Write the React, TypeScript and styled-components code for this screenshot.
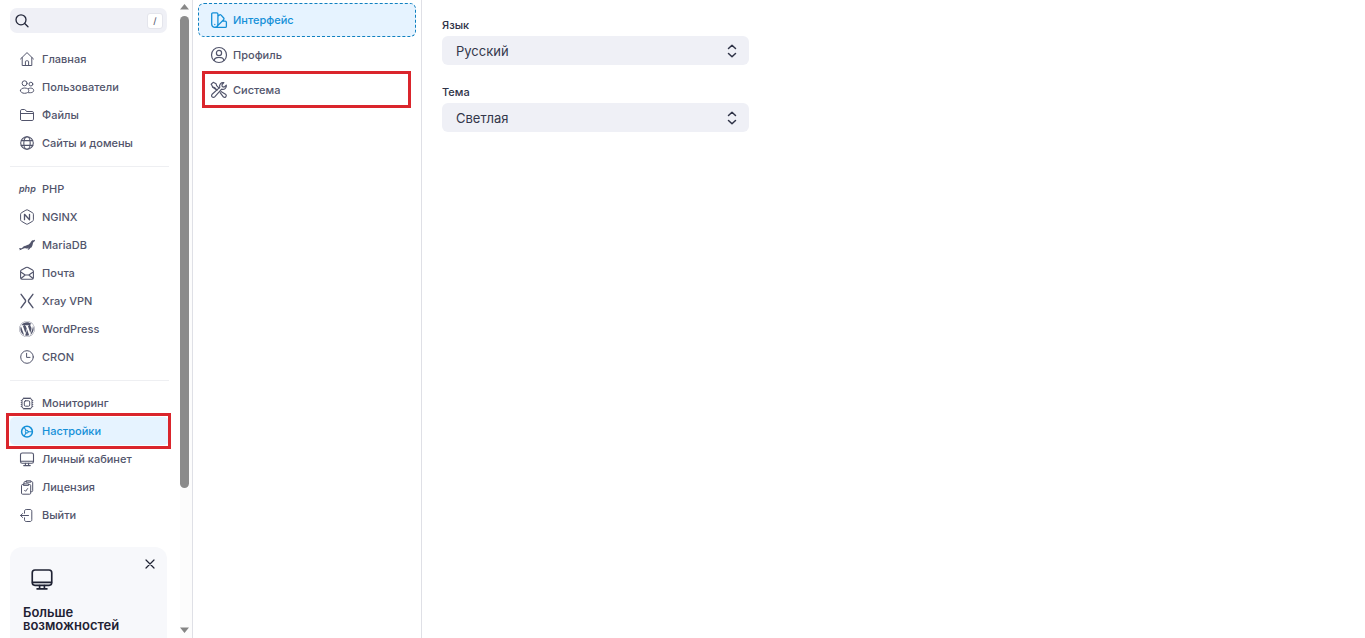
import React from "react";
import styled, { createGlobalStyle, css } from "styled-components";
import { FaWordpress } from "react-icons/fa";
import { SiMariadb } from "react-icons/si";

const GlobalStyle = createGlobalStyle`
  *, *::before, *::after { box-sizing: border-box; }
  body {
    margin: 0;
    background: #fff;
    color: #2f3347;
    font-family: Inter, "Liberation Sans", sans-serif;
    font-size: 11px;
  }
`;

const Shell = styled.div`
  display: flex;
  height: 100vh;
  overflow: hidden;
`;

const Sidebar = styled.aside`
  display: flex;
  flex: none;
  width: 193px;
  border-right: 1px solid #dfe0e6;
`;

const SidebarContent = styled.div`
  flex: 1;
  min-width: 0;
  padding: 8px 11px 0 10px;
  overflow: hidden;
`;

const SearchBox = styled.label`
  display: flex;
  align-items: center;
  height: 25px;
  margin-right: 2px;
  padding: 0 4px;
  border-radius: 7px;
  background: #eff0f6;
  color: #23273a;
`;

const SearchInput = styled.input`
  flex: 1;
  min-width: 0;
  border: 0;
  outline: 0;
  background: transparent;
  font: inherit;
`;

const KeyHint = styled.kbd`
  width: 16px;
  height: 16px;
  border: 1px solid #e4e5ec;
  border-radius: 3px;
  background: #fff;
  color: #5a5e72;
  font: 500 9px/14px Inter, "Liberation Sans", sans-serif;
  text-align: center;
`;

const NavGroups = styled.nav`
  padding-top: 12px;
`;

const NavGroup = styled.ul`
  margin: 0;
  padding: 0;
  list-style: none;

  & + & {
    margin-top: 9px;
    padding-top: 8px;
    border-top: 1px solid #eeeff2;
  }
`;

const NavItem = styled.li`
  position: relative;
`;

const Highlight = styled.span<{ $inset: string }>`
  position: absolute;
  inset: ${(p) => p.$inset};
  border: 3px solid #da252c;
  pointer-events: none;
`;

const NavLink = styled.a<{ $active?: boolean }>`
  display: flex;
  align-items: center;
  gap: 7px;
  height: 28px;
  padding-left: 9px;
  border-radius: 5px;
  color: #52556c;
  font-weight: 500;
  line-height: 16px;
  text-decoration: none;
  white-space: nowrap;
  ${(p) => p.$active && css`
    background: #e6f3ff;
    color: #1590d8;
  `}
`;

const PhpMark = styled.span`
  width: 16px;
  font-size: 9px;
  font-style: italic;
  font-weight: 600;
  line-height: 16px;
`;

const PromoCard = styled.section`
  position: relative;
  margin: 18px 2px 0 0;
  padding: 20px 13px;
  border-radius: 12px;
  background: #f7f8fb;
  color: #1f2233;
`;

const PromoIcon = styled.div`
  display: flex;
  padding-left: 7px;
`;

const PromoTitle = styled.h2`
  margin: 15px 0 0;
  font-size: 13px;
  font-weight: 600;
  line-height: 13px;
`;

const CloseButton = styled.button`
  position: absolute;
  top: 9px;
  right: 9px;
  display: flex;
  padding: 0;
  border: 0;
  background: none;
  color: #1f2233;
`;

const ScrollTrack = styled.div`
  display: flex;
  flex: none;
  flex-direction: column;
  align-items: flex-start;
  width: 12px;
  padding: 4px 0 5px;
  background: #fcfcfc;
`;

const ScrollRail = styled.div`
  flex: 1;
  padding: 6px 0;
`;

const ScrollThumb = styled.div`
  width: 9px;
  height: 78%;
  border-radius: 5px;
  background: #8b8b8b;
`;

const SectionMenu = styled.nav`
  display: flex;
  flex: none;
  flex-direction: column;
  gap: 1px;
  width: 229px;
  padding: 3px 5px;
  border-right: 1px solid #dfe0e6;
`;

const SectionItem = styled.div`
  position: relative;
`;

const SectionLink = styled.a<{ $active?: boolean }>`
  display: flex;
  align-items: center;
  gap: 5px;
  height: 34px;
  padding-left: 11px;
  border: 1px dashed transparent;
  border-radius: 6px;
  color: #52556c;
  font-weight: 500;
  line-height: 16px;
  text-decoration: none;
  ${(p) => p.$active && css`
    border-color: #0f80c0;
    background: #e6f3ff;
    color: #1590d8;
  `}
`;

const Main = styled.main`
  display: flex;
  flex: 1;
  flex-direction: column;
  gap: 19px;
  min-width: 0;
  padding: 17px 20px;
`;

const Field = styled.div`
  display: flex;
  flex-direction: column;
  gap: 3px;
  max-width: 307px;
`;

const FieldLabel = styled.label`
  font-weight: 500;
  line-height: 16px;
`;

const SelectWrap = styled.div`
  display: grid;
  align-items: center;

  & > * { grid-area: 1 / 1; }
  & > svg {
    justify-self: end;
    margin-right: 9px;
    pointer-events: none;
  }
`;

const Select = styled.select`
  appearance: none;
  width: 100%;
  height: 29px;
  padding: 0 32px 0 14px;
  border: 0;
  border-radius: 6px;
  background: #eff0f6;
  color: #33374b;
  font: 400 13px/20px Inter, "Liberation Sans", sans-serif;
`;

type IconProps = { box?: number; size?: number; width?: number; children?: React.ReactNode };

const Svg = ({ box = 16, size = box, width = 1, children }: IconProps) => (
  <svg
    width={size}
    height={size}
    viewBox={`0 0 ${box} ${box}`}
    fill="none"
    stroke="currentColor"
    strokeWidth={width}
    strokeLinecap="round"
    strokeLinejoin="round"
    aria-hidden="true"
  >
    {children}
  </svg>
);

const HomeIcon = () => (
  <Svg>
    <path d="M1.5 8 8 1.6 14.5 8M3.2 6.6v7.9h9.6V6.6M6.4 14.3v-3.6q0-.9.9-.9h1.4q.9 0 .9.9v3.6" />
  </Svg>
);
const UsersIcon = () => (
  <Svg>
    <circle cx="5.6" cy="4.3" r="2.5" />
    <circle cx="11.9" cy="5.1" r="1.9" />
    <path d="M1.4 11.6c0-1.5 1.8-2.6 4.2-2.6s4.2 1.1 4.2 2.6-1.8 2.7-4.2 2.7-4.2-1.2-4.2-2.7ZM9.3 9.7c.7-.4 1.5-.6 2.3-.6 1.8 0 3.1 1 3.1 2.3s-1.3 2.3-3.1 2.3H9.5" />
  </Svg>
);
const FolderIcon = () => (
  <Svg>
    <path d="M1.5 12.2V3.8c0-.8.6-1.3 1.3-1.3h2.7c.4 0 .7.2 1 .5l1 1.5h5.7c.8 0 1.3.6 1.3 1.3v6.4c0 .8-.6 1.3-1.3 1.3H2.8c-.8 0-1.3-.6-1.3-1.3ZM1.5 6.5h13" />
  </Svg>
);
const GlobeIcon = () => (
  <Svg width={1.1}>
    <circle cx="8" cy="8" r="6.3" />
    <ellipse cx="8" cy="8" rx="3.2" ry="6.3" />
    <path d="M2.3 5.6h11.4M2.3 10.4h11.4" />
  </Svg>
);
const NginxIcon = () => (
  <Svg>
    <path d="M7.2 1c.5-.3 1.100-.3 1.600 0l4.800 2.800c.5.3.8.8.8 1.400v5.600c0 .6-.3 1.100-.8 1.400L8.800 15c-.5.3-1.100.3-1.600 0l-4.800-2.800c-.5-.3-.8-.8-.8-1.400V5.200c0-.6.3-1.100.8-1.400Z" />
    <path d="M5.500 10.700V5.300l5 5.400V5.300" strokeWidth="1.300" />
  </Svg>
);
const MailIcon = () => (
  <Svg width={1.1}>
    <path d="M1.6 6.300c0-.6.3-1 .8-1.200L7 2.500c.6-.3 1.400-.3 2 0l4.600 2.600c.5.3.8.7.8 1.200v6.500c0 .9-.6 1.500-1.400 1.500H3c-.8 0-1.400-.6-1.400-1.500ZM1.800 7l4.400 3h3.600l4.400-3M2 13.500l4.200-3.500M14 13.500 9.800 10" />
  </Svg>
);
const XrayIcon = () => (
  <Svg width={1.4}>
    <path d="M2.100 1.300 6.300 7c.4.600.4 1.400 0 2l-4.200 5.700M13.900 1.300 9.700 7c-.4.600-.4 1.400 0 2l4.200 5.700" />
  </Svg>
);
const ClockIcon = () => (
  <Svg>
    <circle cx="8" cy="8" r="6.3" />
    <path d="M7.6 4.300v4.100H11" />
  </Svg>
);
const ChipIcon = () => (
  <Svg>
    <rect x="3" y="3.500" width="10" height="10" rx="2" />
    <rect x="5.300" y="5.800" width="5.400" height="5.400" rx="1.200" />
    <path
      d="M4.500 2.800h7M4.500 14.200h7M2.300 5v7M13.700 5v7"
      strokeWidth="1"
      strokeLinecap="butt"
      strokeDasharray="1 1"
    />
  </Svg>
);
const SettingsIcon = () => (
  <Svg width={1.5}>
    <circle cx="8" cy="8.700" r="5.400" />
    <path d="M9.300 8.700h3.900M7.100 7.700 5.200 4.300M7.100 9.700l-1.900 3.400" strokeWidth="1.100" />
    <circle cx="7.800" cy="8.700" r="1.500" strokeWidth="1" />
  </Svg>
);
const MonitorIcon = ({ size, width = 1.1 }: IconProps) => (
  <Svg size={size} width={width}>
    <rect x="1.500" y="2" width="13" height="10.200" rx="1.800" />
    <path d="M1.700 10.200h12.600M6.400 12.300v2.200M9.600 12.300v2.200M4.700 14.600h6.600" />
  </Svg>
);
const LicenseIcon = () => (
  <Svg>
    <path d="M5 5V3.600c0-.6.400-1 1-1h1.300M12.200 2.600h.5c.6 0 1 .4 1 1v8.100c0 .6-.4 1-1 1h-.9M7.500 1.800h4.400v1.400H7.500Z" />
    <path d="M4.300 5.500h-.8c-.6 0-1 .4-1 1v7.700c0 .6.400 1 1 1h7.200c.6 0 1-.4 1-1V6.500c0-.6-.4-1-1-1h-.8M4.700 4.900h4.900v1.500H4.700ZM5.600 11.300l1 1 2-2.700" />
  </Svg>
);
const LogoutIcon = () => (
  <Svg>
    <path d="M5.500 6.200V4.200c0-1 .7-1.700 1.700-1.700h3.900c1 0 1.700.7 1.700 1.700v8.600c0 1-.7 1.700-1.700 1.700H7.200c-1 0-1.700-.7-1.700-1.700v-2M9.500 8.500H1.600M3.600 6.500l-2 2 2 2" />
  </Svg>
);
const SwatchIcon = () => (
  <Svg box={18} width={1.3}>
    <path d="M1.700 3c0-.7.500-1.200 1.200-1.200h3.800c.7 0 1.200.5 1.200 1.200v10.300a3.100 3.100 0 0 1-6.200 0ZM7.900 5.300l1.500-1.300c.5-.4 1.200-.4 1.700.1l2.600 2.900c.4.500.4 1.200-.1 1.700L6.800 15.600M12.200 10.200h3c.7 0 1.200.5 1.200 1.200v3.800c0 .7-.5 1.200-1.200 1.200H4.800M4.800 13.400v.1" />
  </Svg>
);
const ProfileIcon = () => (
  <Svg box={18} width={1.2}>
    <circle cx="9" cy="9" r="7.500" />
    <circle cx="9" cy="6.900" r="2.600" />
    <path d="M4.300 14.400c0-2 2-3.100 4.700-3.100s4.700 1.100 4.700 3.100" />
  </Svg>
);
const ToolsIcon = () => (
  <Svg box={18} width={1.2}>
    <path d="M1.300 3.200 3.200 1.300l2.900 1.500.5 1.900 2.500 2.500M7 9.200 4.700 6.700l-1.900-.5ZM11 10.500l4.900 3a1.800 1.800 0 0 1-2.400 2.600l-3.400-4.400" />
    <path d="M2.800 6.200 1.300 3.200M16.300 4.200a3.500 3.500 0 0 1-4.700 4l-6.900 7.700a1.800 1.800 0 0 1-2.600-2.600l7.700-6.900a3.500 3.500 0 0 1 4-4.700l-1.900 2.200.4 1.800 1.800.4Z" />
  </Svg>
);
const SearchIcon = () => (
  <Svg width={1.3}>
    <circle cx="7" cy="6.800" r="5" />
    <path d="m10.700 10.500 3.300 3.300" />
  </Svg>
);
const ChevronsIcon = () => (
  <Svg width={1.5}>
    <path d="m4.500 5.500 3.500-3.300 3.500 3.300M4.500 10.500 8 13.800l3.500-3.300" />
  </Svg>
);

type Entry = { label: string; icon: React.ReactNode; active?: boolean };

const groups: Entry[][] = [
  [
    { label: "Главная", icon: <HomeIcon /> },
    { label: "Пользователи", icon: <UsersIcon /> },
    { label: "Файлы", icon: <FolderIcon /> },
    { label: "Сайты и домены", icon: <GlobeIcon /> },
  ],
  [
    { label: "PHP", icon: <PhpMark aria-hidden="true">php</PhpMark> },
    { label: "NGINX", icon: <NginxIcon /> },
    { label: "MariaDB", icon: <SiMariadb size={16} /> },
    { label: "Почта", icon: <MailIcon /> },
    { label: "Xray VPN", icon: <XrayIcon /> },
    { label: "WordPress", icon: <FaWordpress size={16} /> },
    { label: "CRON", icon: <ClockIcon /> },
  ],
  [
    { label: "Мониторинг", icon: <ChipIcon /> },
    { label: "Настройки", icon: <SettingsIcon />, active: true },
    { label: "Личный кабинет", icon: <MonitorIcon /> },
    { label: "Лицензия", icon: <LicenseIcon /> },
    { label: "Выйти", icon: <LogoutIcon /> },
  ],
];

export default function App() {
  return (
    <>
      <GlobalStyle />
      <Shell>
        <Sidebar>
          <SidebarContent>
            <SearchBox>
              <SearchIcon />
              <SearchInput type="search" aria-label="Поиск" />
              <KeyHint>/</KeyHint>
            </SearchBox>
            <NavGroups>
              {groups.map((items, i) => (
                <NavGroup key={i}>
                  {items.map((item) => (
                    <NavItem key={item.label}>
                      <NavLink href="#" $active={item.active}>
                        {item.icon}
                        {item.label}
                      </NavLink>
                      {item.active && <Highlight $inset="-4px -2px -4px -4px" />}
                    </NavItem>
                  ))}
                </NavGroup>
              ))}
            </NavGroups>
            <PromoCard>
              <CloseButton aria-label="Закрыть">
                <Svg width={1.2}><path d="m4 4 8 8M12 4l-8 8" /></Svg>
              </CloseButton>
              <PromoIcon><MonitorIcon size={24} /></PromoIcon>
              <PromoTitle>Больше возможностей</PromoTitle>
            </PromoCard>
          </SidebarContent>
          <ScrollTrack aria-hidden="true">
            <svg width="9" height="6" viewBox="0 0 9 6" fill="#858585"><path d="M0 5.500 4.500 0 9 5.500Z" /></svg>
            <ScrollRail><ScrollThumb /></ScrollRail>
            <svg width="9" height="6" viewBox="0 0 9 6" fill="#858585"><path d="M0 .5 4.500 6 9 .5Z" /></svg>
          </ScrollTrack>
        </Sidebar>
        <SectionMenu>
          <SectionItem>
            <SectionLink href="#" $active><SwatchIcon />Интерфейс</SectionLink>
          </SectionItem>
          <SectionItem>
            <SectionLink href="#"><ProfileIcon />Профиль</SectionLink>
          </SectionItem>
          <SectionItem>
            <SectionLink href="#"><ToolsIcon />Система</SectionLink>
            <Highlight $inset="-2px 5px -1px 4px" />
          </SectionItem>
        </SectionMenu>
        <Main>
          <Field>
            <FieldLabel htmlFor="language">Язык</FieldLabel>
            <SelectWrap>
              <Select id="language"><option>Русский</option></Select>
              <ChevronsIcon />
            </SelectWrap>
          </Field>
          <Field>
            <FieldLabel htmlFor="theme">Тема</FieldLabel>
            <SelectWrap>
              <Select id="theme"><option>Светлая</option></Select>
              <ChevronsIcon />
            </SelectWrap>
          </Field>
        </Main>
      </Shell>
    </>
  );
}
